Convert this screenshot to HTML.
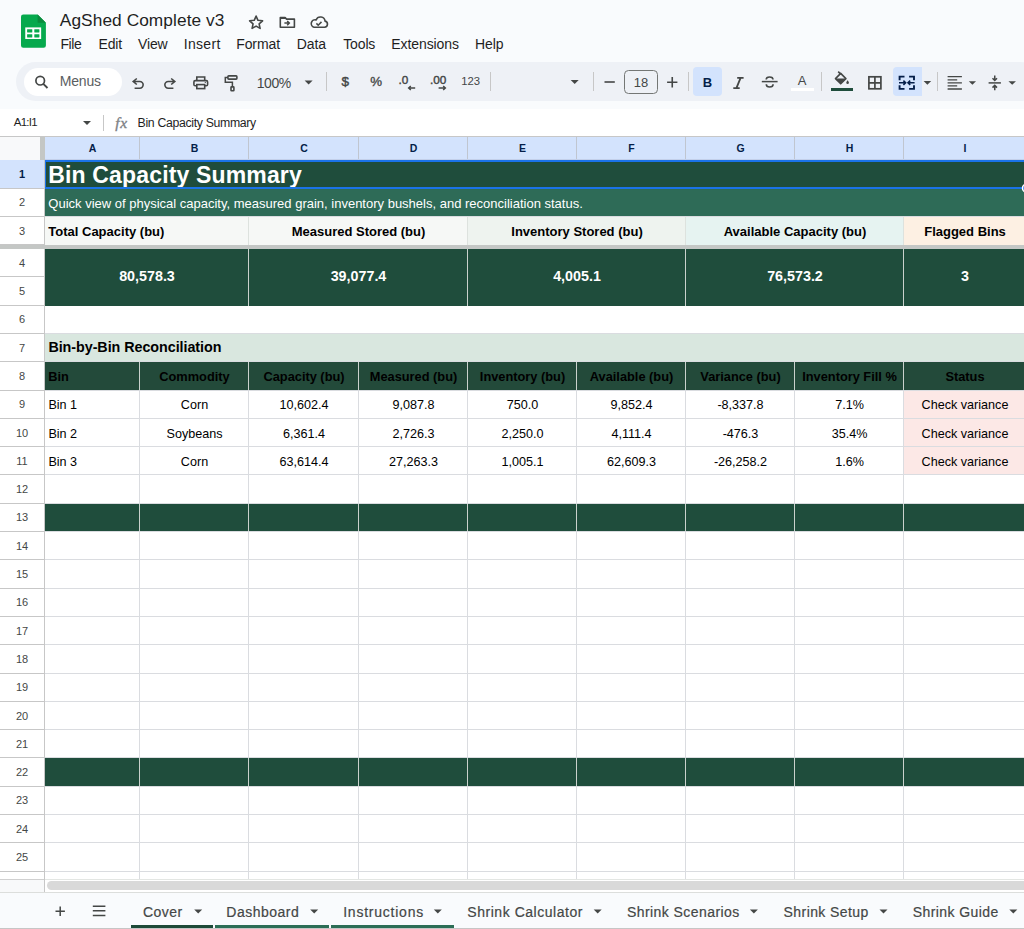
<!DOCTYPE html><html><head><meta charset="utf-8"><style>
*{box-sizing:border-box;margin:0;padding:0}
html,body{width:1024px;height:929px;overflow:hidden;background:#f9fbfd;font-family:'Liberation Sans', sans-serif;position:relative}
.abs{position:absolute}
.t{position:absolute;white-space:nowrap}
svg{position:absolute;overflow:visible}
</style></head><body>

<svg style="left:20.75px;top:14px" width="25" height="34" viewBox="0 0 25 34">
<path d="M2.3 0.5 H16.6 L24.9 8.8 V31.5 A2.3 2.3 0 0 1 22.6 33.8 H2.3 A2.3 2.3 0 0 1 0 31.5 V2.8 A2.3 2.3 0 0 1 2.3 0.5Z" fill="#06a94d"/>
<path d="M16.6 0.5 L24.9 8.8 H16.6Z" fill="#0a8b3d"/>
<rect x="4.25" y="13.4" width="15.9" height="11.6" fill="#fff"/>
<rect x="6.1" y="15.2" width="5.2" height="3.2" rx="0.3" fill="#06a94d"/>
<rect x="13.3" y="15.2" width="5.1" height="3.2" rx="0.3" fill="#06a94d"/>
<rect x="6.1" y="20.2" width="5.2" height="3.2" rx="0.3" fill="#06a94d"/>
<rect x="13.3" y="20.2" width="5.1" height="3.2" rx="0.3" fill="#06a94d"/>
</svg>
<div class="t" style="left:59.80px;top:12.35px;font-size:17.30px;line-height:17.30px;color:#1f1f1f;font-weight:normal;font-family:'Liberation Sans', sans-serif;letter-spacing:0.076px">AgShed Complete v3</div>
<svg style="left:0;top:0" width="1" height="1">
<path d="M256.10 16.10L257.98 20.31L262.57 20.80L259.14 23.89L260.10 28.40L256.10 26.10L252.10 28.40L253.06 23.89L249.63 20.80L254.22 20.31z" fill="none" stroke="#444746" stroke-width="1.6" stroke-linejoin="round"/>
<path d="M280.3 17.6h4.8l1.5 1.5h7.8v8.2H280.3z" fill="none" stroke="#444746" stroke-width="1.6" stroke-linejoin="round"/><path d="M280.3 17.6h4.8l1.5 1.5h-6.3z" fill="#444746"/>
<path d="M284.4 23.1h4.8M287.2 21l2.1 2.1-2.1 2.1" fill="none" stroke="#444746" stroke-width="1.5"/>
<path d="M314 27.2h10.6a3.1 3.1 0 0 0 .5-6.1 4.7 4.7 0 0 0-9-1.2 3.7 3.7 0 0 0-2.1 7.3z" fill="none" stroke="#444746" stroke-width="1.6"/>
<path d="M316.4 23.4l1.8 1.8 3.3-3.3" fill="none" stroke="#444746" stroke-width="1.5"/>
</svg>
<div class="t" style="left:60.40px;top:36.95px;font-size:14.00px;line-height:14.00px;color:#1f1f1f;font-weight:normal;font-family:'Liberation Sans', sans-serif;letter-spacing:-0.367px">File</div>
<div class="t" style="left:98.50px;top:36.95px;font-size:14.00px;line-height:14.00px;color:#1f1f1f;font-weight:normal;font-family:'Liberation Sans', sans-serif;letter-spacing:-0.167px">Edit</div>
<div class="t" style="left:138.00px;top:36.95px;font-size:14.00px;line-height:14.00px;color:#1f1f1f;font-weight:normal;font-family:'Liberation Sans', sans-serif;letter-spacing:-0.133px">View</div>
<div class="t" style="left:183.70px;top:36.95px;font-size:14.00px;line-height:14.00px;color:#1f1f1f;font-weight:normal;font-family:'Liberation Sans', sans-serif;letter-spacing:0.320px">Insert</div>
<div class="t" style="left:236.20px;top:36.95px;font-size:14.00px;line-height:14.00px;color:#1f1f1f;font-weight:normal;font-family:'Liberation Sans', sans-serif;letter-spacing:-0.080px">Format</div>
<div class="t" style="left:296.80px;top:36.95px;font-size:14.00px;line-height:14.00px;color:#1f1f1f;font-weight:normal;font-family:'Liberation Sans', sans-serif;letter-spacing:-0.100px">Data</div>
<div class="t" style="left:343.20px;top:36.95px;font-size:14.00px;line-height:14.00px;color:#1f1f1f;font-weight:normal;font-family:'Liberation Sans', sans-serif;letter-spacing:-0.125px">Tools</div>
<div class="t" style="left:391.30px;top:36.95px;font-size:14.00px;line-height:14.00px;color:#1f1f1f;font-weight:normal;font-family:'Liberation Sans', sans-serif;letter-spacing:-0.089px">Extensions</div>
<div class="t" style="left:475.10px;top:36.95px;font-size:14.00px;line-height:14.00px;color:#1f1f1f;font-weight:normal;font-family:'Liberation Sans', sans-serif;letter-spacing:-0.100px">Help</div>
<div class="abs" style="left:16.00px;top:62.00px;width:1024.00px;height:39.00px;background:#eef1f6;border-radius:19.5px"></div>
<div class="abs" style="left:24.00px;top:68.00px;width:98.00px;height:27.50px;background:#fff;border-radius:14px"></div>
<svg style="left:0;top:0" width="1" height="1"><circle cx="40.2" cy="80.7" r="4.3" fill="none" stroke="#444746" stroke-width="1.7"/><path d="M43.3 83.8l4.2 4.2" stroke="#444746" stroke-width="1.9"/><path d="M136.8 78.5L133.2 81.5l3.6 3M133.6 81.5H139.8A3.35 3.35 0 0 1 139.8 88.2H134.6" fill="none" stroke="#444746" stroke-width="1.6"/><path d="M171.2 78.5L174.8 81.5l-3.6 3M174.4 81.5H168.2A3.35 3.35 0 0 0 168.2 88.2H173.4" fill="none" stroke="#444746" stroke-width="1.6"/><path d="M196.8 80V77h7.9v3" fill="none" stroke="#444746" stroke-width="1.6"/><rect x="193.9" y="80.6" width="13.7" height="5.2" rx="1.3" fill="none" stroke="#444746" stroke-width="1.6"/><rect x="196.8" y="84.6" width="7.9" height="4" fill="#eef1f6" stroke="#444746" stroke-width="1.6"/><circle cx="205.3" cy="82.4" r="0.6" fill="#444746"/><rect x="227.9" y="75.9" width="9" height="3.2" rx="0.8" fill="none" stroke="#444746" stroke-width="1.6"/><path d="M227.9 77.5H225.3V82.2H232.4V86.4" fill="none" stroke="#444746" stroke-width="1.5"/><rect x="231" y="86.9" width="2.9" height="3.9" rx="0.6" fill="none" stroke="#444746" stroke-width="1.6"/></svg>
<div class="t" style="left:59.70px;top:74.45px;font-size:14.00px;line-height:14.00px;color:#5b5e62;font-weight:normal;font-family:'Liberation Sans', sans-serif;letter-spacing:-0.175px">Menus</div>
<div class="t" style="left:256.70px;top:75.95px;font-size:14.00px;line-height:14.00px;color:#444746;font-weight:normal;font-family:'Liberation Sans', sans-serif;letter-spacing:-0.400px">100%</div>
<svg style="left:0;top:0" width="1" height="1"><path d="M304.60 80.60h8.00l-4.00 4.00z" fill="#444746"/></svg>
<div class="abs" style="left:325.50px;top:72.30px;width:1.00px;height:19.10px;background:#c7c7c7;"></div>
<div class="t" style="left:45.20px;width:600px;text-align:center;top:74.57px;font-size:13.50px;line-height:13.50px;color:#444746;font-weight:normal;font-family:'Liberation Sans', sans-serif;-webkit-text-stroke:0.45px #444746">$</div>
<div class="t" style="left:76.10px;width:600px;text-align:center;top:74.84px;font-size:13.30px;line-height:13.30px;color:#444746;font-weight:normal;font-family:'Liberation Sans', sans-serif;-webkit-text-stroke:0.35px #444746">%</div>
<div class="t" style="left:398.60px;top:74.61px;font-size:11.80px;line-height:11.80px;color:#444746;font-weight:normal;font-family:'Liberation Sans', sans-serif;-webkit-text-stroke:0.4px #444746">.0</div>
<div class="t" style="left:429.90px;top:74.61px;font-size:11.80px;line-height:11.80px;color:#444746;font-weight:normal;font-family:'Liberation Sans', sans-serif;-webkit-text-stroke:0.4px #444746">.00</div>
<div class="t" style="left:170.60px;width:600px;text-align:center;top:76.23px;font-size:11.30px;line-height:11.30px;color:#444746;font-weight:normal;font-family:'Liberation Sans', sans-serif">123</div>
<div class="abs" style="left:490.10px;top:72.30px;width:1.00px;height:19.10px;background:#c7c7c7;"></div>
<svg style="left:0;top:0" width="1" height="1"><path d="M570.70 79.90h8.00l-4.00 4.00z" fill="#444746"/></svg>
<div class="abs" style="left:593.20px;top:72.30px;width:1.00px;height:19.10px;background:#c7c7c7;"></div>
<div class="abs" style="left:624.40px;top:70.10px;width:33.20px;height:23.80px;background:transparent;border:1.4px solid #747775;border-radius:4.5px"></div>
<div class="t" style="left:341.00px;width:600px;text-align:center;top:75.89px;font-size:13.00px;line-height:13.00px;color:#444746;font-weight:normal;font-family:'Liberation Sans', sans-serif">18</div>
<div class="abs" style="left:688.20px;top:72.30px;width:1.00px;height:19.10px;background:#c7c7c7;"></div>
<div class="abs" style="left:692.80px;top:67.30px;width:29.10px;height:29.10px;background:#d3e3fd;border-radius:4px"></div>
<div class="t" style="left:407.50px;width:600px;text-align:center;top:75.89px;font-size:13.00px;line-height:13.00px;color:#041e49;font-weight:bold;font-family:'Liberation Sans', sans-serif">B</div>
<div class="t" style="left:502.10px;width:600px;text-align:center;top:73.79px;font-size:13.00px;line-height:13.00px;color:#444746;font-weight:normal;font-family:'Liberation Sans', sans-serif">A</div>
<div class="abs" style="left:790.90px;top:87.70px;width:22.70px;height:3.70px;background:#ffffff;"></div>
<div class="abs" style="left:821.10px;top:72.30px;width:1.00px;height:19.10px;background:#c7c7c7;"></div>
<div class="abs" style="left:830.70px;top:87.70px;width:22.80px;height:3.70px;background:#1f4d3c;"></div>
<div class="abs" style="left:892.50px;top:67.00px;width:29.50px;height:29.40px;background:#d3e3fd;border-radius:4px 0 0 4px"></div>
<svg style="left:0;top:0" width="1" height="1"><path d="M923.60 81.00h7.60l-3.80 3.80z" fill="#444746"/></svg>
<div class="abs" style="left:937.10px;top:72.30px;width:1.00px;height:19.10px;background:#c7c7c7;"></div>
<svg style="left:0;top:0" width="1" height="1"><path d="M968.80 81.15h7.20l-3.60 3.70z" fill="#444746"/></svg>
<svg style="left:0;top:0" width="1" height="1"><path d="M1008.45 81.15h7.50l-3.75 3.70z" fill="#444746"/></svg>
<svg style="left:0;top:0" width="1" height="1"><path d="M415.2 88H408.6M410.8 86l-2.2 2 2.2 2" fill="none" stroke="#444746" stroke-width="1.4"/><path d="M438.6 88H445.4M443.2 86l2.2 2-2.2 2" fill="none" stroke="#444746" stroke-width="1.4"/><path d="M604.5 82h10.3" stroke="#444746" stroke-width="1.6"/><path d="M667.1 82.2h10.3M672.25 77.1v10.3" stroke="#444746" stroke-width="1.6"/><path d="M737.2 77.8h6.4M733.3 88.2h6.4M740.6 77.8l-4.2 10.4" fill="none" stroke="#444746" stroke-width="1.8"/><path d="M761.8 81.6h15.8" stroke="#444746" stroke-width="1.5"/><path d="M773 79.6a3.4 2.6 0 0 0-6.8 0M766.3 84.2a3.4 2.8 0 0 0 6.8 0" fill="none" stroke="#444746" stroke-width="1.6"/><path d="M835.5 78.6l5.2-5.2 5.2 5.2-5.2 5.2z" fill="none" stroke="#444746" stroke-width="1.6" stroke-linejoin="round"/><path d="M835.5 78.6h10.4l-5.2 5.2z" fill="#444746"/><path d="M838.2 71.6l2.5 2.5" stroke="#444746" stroke-width="1.6"/><path d="M847.6 80.2c-.9 1.3-1.3 2-1.3 2.6a1.3 1.3 0 0 0 2.6 0c0-.6-.4-1.3-1.3-2.6z" fill="#444746"/><rect x="868.9" y="76.8" width="12" height="12" fill="none" stroke="#444746" stroke-width="1.7"/><path d="M874.9 76.8v12M868.9 82.8h12" stroke="#444746" stroke-width="1.7"/><path d="M904.5 76.6H899.6V80.2M899.6 85.2V88.9H904.5M909.1 76.6H914V80.2M914 85.2V88.9H909.1" fill="none" stroke="#041e49" stroke-width="1.9"/><path d="M899 82.75h6.2M903.4 80.6l2.2 2.15-2.2 2.15M914.6 82.75h-6.2M910.2 80.6l-2.2 2.15 2.2 2.15" fill="none" stroke="#041e49" stroke-width="1.6"/><path d="M947.6 76.7h14.3M947.6 79.8h9.6M947.6 82.8h14.3M947.6 85.9h9.6M947.6 89h14.3" stroke="#444746" stroke-width="1.3"/><path d="M988.6 82.9h12.3" stroke="#444746" stroke-width="1.5"/><path d="M994.75 75.6v4.4M992.5 78.3l2.25 2.2 2.25-2.2M994.75 90.3v-4.4M992.5 87.6l2.25-2.2 2.25 2.2" fill="none" stroke="#444746" stroke-width="1.5"/></svg>
<div class="abs" style="left:0.00px;top:108.50px;width:1024.00px;height:27.50px;background:#ffffff;"></div>
<div class="t" style="left:13.70px;top:117.36px;font-size:11.50px;line-height:11.50px;color:#1f1f1f;font-weight:normal;font-family:'Liberation Sans', sans-serif;letter-spacing:-0.725px">A1:I1</div>
<svg style="left:0;top:0" width="1" height="1"><path d="M83.00 121.10h8.00l-4.00 4.00z" fill="#444746"/></svg>
<div class="abs" style="left:103.00px;top:115.20px;width:1.00px;height:15.80px;background:#c7c7c7;"></div>
<div class="t" style="left:115.20px;top:115.48px;font-size:15.50px;line-height:15.50px;color:#7d8185;font-weight:normal;font-family:'Liberation Serif', serif;letter-spacing:0.800px;font-style:italic;-webkit-text-stroke:0.35px #7d8185">fx</div>
<div class="t" style="left:137.60px;top:116.89px;font-size:12.30px;line-height:12.30px;color:#1f1f1f;font-weight:normal;font-family:'Liberation Sans', sans-serif;letter-spacing:-0.337px">Bin Capacity Summary</div>
<div class="abs" style="left:0.00px;top:136.00px;width:1024.00px;height:756.00px;background:#ffffff;"></div>
<div class="abs" style="left:0.00px;top:136.00px;width:1024.00px;height:1.00px;background:#c7c7c7;"></div>
<div class="abs" style="left:0.00px;top:137.00px;width:40.30px;height:22.60px;background:#f8f9fa;"></div>
<div class="abs" style="left:0.00px;top:159.60px;width:40.30px;height:1.00px;background:#c7c7c7;"></div>
<div class="abs" style="left:40.30px;top:137.00px;width:4.30px;height:23.20px;background:#c4c7c5;"></div>
<div class="abs" style="left:44.60px;top:137.00px;width:979.40px;height:23.00px;background:#d3e3fd;"></div>
<div class="abs" style="left:139.00px;top:137.00px;width:1.00px;height:23.00px;background:#c0c6d0;"></div>
<div class="abs" style="left:248.00px;top:137.00px;width:1.00px;height:23.00px;background:#c0c6d0;"></div>
<div class="abs" style="left:358.00px;top:137.00px;width:1.00px;height:23.00px;background:#c0c6d0;"></div>
<div class="abs" style="left:467.00px;top:137.00px;width:1.00px;height:23.00px;background:#c0c6d0;"></div>
<div class="abs" style="left:576.00px;top:137.00px;width:1.00px;height:23.00px;background:#c0c6d0;"></div>
<div class="abs" style="left:685.00px;top:137.00px;width:1.00px;height:23.00px;background:#c0c6d0;"></div>
<div class="abs" style="left:794.00px;top:137.00px;width:1.00px;height:23.00px;background:#c0c6d0;"></div>
<div class="abs" style="left:903.00px;top:137.00px;width:1.00px;height:23.00px;background:#c0c6d0;"></div>
<div class="abs" style="left:45.00px;top:159.00px;width:979.00px;height:1.00px;background:#c3d0ea;"></div>
<div class="t" style="left:-207.50px;width:600px;text-align:center;top:143.01px;font-size:10.50px;line-height:10.50px;color:#041e49;font-weight:bold;font-family:'Liberation Sans', sans-serif">A</div>
<div class="t" style="left:-105.50px;width:600px;text-align:center;top:143.01px;font-size:10.50px;line-height:10.50px;color:#041e49;font-weight:bold;font-family:'Liberation Sans', sans-serif">B</div>
<div class="t" style="left:4.00px;width:600px;text-align:center;top:143.01px;font-size:10.50px;line-height:10.50px;color:#041e49;font-weight:bold;font-family:'Liberation Sans', sans-serif">C</div>
<div class="t" style="left:113.50px;width:600px;text-align:center;top:143.01px;font-size:10.50px;line-height:10.50px;color:#041e49;font-weight:bold;font-family:'Liberation Sans', sans-serif">D</div>
<div class="t" style="left:222.50px;width:600px;text-align:center;top:143.01px;font-size:10.50px;line-height:10.50px;color:#041e49;font-weight:bold;font-family:'Liberation Sans', sans-serif">E</div>
<div class="t" style="left:331.50px;width:600px;text-align:center;top:143.01px;font-size:10.50px;line-height:10.50px;color:#041e49;font-weight:bold;font-family:'Liberation Sans', sans-serif">F</div>
<div class="t" style="left:440.50px;width:600px;text-align:center;top:143.01px;font-size:10.50px;line-height:10.50px;color:#041e49;font-weight:bold;font-family:'Liberation Sans', sans-serif">G</div>
<div class="t" style="left:549.50px;width:600px;text-align:center;top:143.01px;font-size:10.50px;line-height:10.50px;color:#041e49;font-weight:bold;font-family:'Liberation Sans', sans-serif">H</div>
<div class="t" style="left:665.00px;width:600px;text-align:center;top:143.01px;font-size:10.50px;line-height:10.50px;color:#041e49;font-weight:bold;font-family:'Liberation Sans', sans-serif">I</div>
<div class="abs" style="left:0.00px;top:160.20px;width:44.60px;height:28.30px;background:#d3e3fd;"></div>
<div class="abs" style="left:0.00px;top:187.50px;width:44.60px;height:1.00px;background:#c7c7c7;"></div>
<div class="abs" style="left:44.60px;top:187.50px;width:979.40px;height:1.00px;background:#dadce0;"></div>
<div class="t" style="left:-278.00px;width:600px;text-align:center;top:168.94px;font-size:11.00px;line-height:11.00px;color:#041e49;font-weight:bold;font-family:'Liberation Sans', sans-serif">1</div>
<div class="abs" style="left:0.00px;top:215.80px;width:44.60px;height:1.00px;background:#c7c7c7;"></div>
<div class="abs" style="left:44.60px;top:215.80px;width:979.40px;height:1.00px;background:#dadce0;"></div>
<div class="t" style="left:-278.00px;width:600px;text-align:center;top:197.24px;font-size:11.00px;line-height:11.00px;color:#444746;font-weight:normal;font-family:'Liberation Sans', sans-serif">2</div>
<div class="abs" style="left:0.00px;top:244.10px;width:44.60px;height:1.00px;background:#c7c7c7;"></div>
<div class="abs" style="left:44.60px;top:244.10px;width:979.40px;height:1.00px;background:#dadce0;"></div>
<div class="t" style="left:-278.00px;width:600px;text-align:center;top:225.54px;font-size:11.00px;line-height:11.00px;color:#444746;font-weight:normal;font-family:'Liberation Sans', sans-serif">3</div>
<div class="abs" style="left:0.00px;top:276.30px;width:44.60px;height:1.00px;background:#c7c7c7;"></div>
<div class="abs" style="left:44.60px;top:276.30px;width:979.40px;height:1.00px;background:#dadce0;"></div>
<div class="t" style="left:-278.00px;width:600px;text-align:center;top:257.74px;font-size:11.00px;line-height:11.00px;color:#444746;font-weight:normal;font-family:'Liberation Sans', sans-serif">4</div>
<div class="abs" style="left:0.00px;top:304.60px;width:44.60px;height:1.00px;background:#c7c7c7;"></div>
<div class="abs" style="left:44.60px;top:304.60px;width:979.40px;height:1.00px;background:#dadce0;"></div>
<div class="t" style="left:-278.00px;width:600px;text-align:center;top:286.04px;font-size:11.00px;line-height:11.00px;color:#444746;font-weight:normal;font-family:'Liberation Sans', sans-serif">5</div>
<div class="abs" style="left:0.00px;top:332.90px;width:44.60px;height:1.00px;background:#c7c7c7;"></div>
<div class="abs" style="left:44.60px;top:332.90px;width:979.40px;height:1.00px;background:#dadce0;"></div>
<div class="t" style="left:-278.00px;width:600px;text-align:center;top:314.34px;font-size:11.00px;line-height:11.00px;color:#444746;font-weight:normal;font-family:'Liberation Sans', sans-serif">6</div>
<div class="abs" style="left:0.00px;top:361.20px;width:44.60px;height:1.00px;background:#c7c7c7;"></div>
<div class="abs" style="left:44.60px;top:361.20px;width:979.40px;height:1.00px;background:#dadce0;"></div>
<div class="t" style="left:-278.00px;width:600px;text-align:center;top:342.64px;font-size:11.00px;line-height:11.00px;color:#444746;font-weight:normal;font-family:'Liberation Sans', sans-serif">7</div>
<div class="abs" style="left:0.00px;top:389.50px;width:44.60px;height:1.00px;background:#c7c7c7;"></div>
<div class="abs" style="left:44.60px;top:389.50px;width:979.40px;height:1.00px;background:#dadce0;"></div>
<div class="t" style="left:-278.00px;width:600px;text-align:center;top:370.94px;font-size:11.00px;line-height:11.00px;color:#444746;font-weight:normal;font-family:'Liberation Sans', sans-serif">8</div>
<div class="abs" style="left:0.00px;top:417.80px;width:44.60px;height:1.00px;background:#c7c7c7;"></div>
<div class="abs" style="left:44.60px;top:417.80px;width:979.40px;height:1.00px;background:#dadce0;"></div>
<div class="t" style="left:-278.00px;width:600px;text-align:center;top:399.24px;font-size:11.00px;line-height:11.00px;color:#444746;font-weight:normal;font-family:'Liberation Sans', sans-serif">9</div>
<div class="abs" style="left:0.00px;top:446.10px;width:44.60px;height:1.00px;background:#c7c7c7;"></div>
<div class="abs" style="left:44.60px;top:446.10px;width:979.40px;height:1.00px;background:#dadce0;"></div>
<div class="t" style="left:-278.00px;width:600px;text-align:center;top:427.54px;font-size:11.00px;line-height:11.00px;color:#444746;font-weight:normal;font-family:'Liberation Sans', sans-serif">10</div>
<div class="abs" style="left:0.00px;top:474.40px;width:44.60px;height:1.00px;background:#c7c7c7;"></div>
<div class="abs" style="left:44.60px;top:474.40px;width:979.40px;height:1.00px;background:#dadce0;"></div>
<div class="t" style="left:-278.00px;width:600px;text-align:center;top:455.84px;font-size:11.00px;line-height:11.00px;color:#444746;font-weight:normal;font-family:'Liberation Sans', sans-serif">11</div>
<div class="abs" style="left:0.00px;top:502.70px;width:44.60px;height:1.00px;background:#c7c7c7;"></div>
<div class="abs" style="left:44.60px;top:502.70px;width:979.40px;height:1.00px;background:#dadce0;"></div>
<div class="t" style="left:-278.00px;width:600px;text-align:center;top:484.14px;font-size:11.00px;line-height:11.00px;color:#444746;font-weight:normal;font-family:'Liberation Sans', sans-serif">12</div>
<div class="abs" style="left:0.00px;top:531.00px;width:44.60px;height:1.00px;background:#c7c7c7;"></div>
<div class="abs" style="left:44.60px;top:531.00px;width:979.40px;height:1.00px;background:#dadce0;"></div>
<div class="t" style="left:-278.00px;width:600px;text-align:center;top:512.44px;font-size:11.00px;line-height:11.00px;color:#444746;font-weight:normal;font-family:'Liberation Sans', sans-serif">13</div>
<div class="abs" style="left:0.00px;top:559.30px;width:44.60px;height:1.00px;background:#c7c7c7;"></div>
<div class="abs" style="left:44.60px;top:559.30px;width:979.40px;height:1.00px;background:#dadce0;"></div>
<div class="t" style="left:-278.00px;width:600px;text-align:center;top:540.74px;font-size:11.00px;line-height:11.00px;color:#444746;font-weight:normal;font-family:'Liberation Sans', sans-serif">14</div>
<div class="abs" style="left:0.00px;top:587.60px;width:44.60px;height:1.00px;background:#c7c7c7;"></div>
<div class="abs" style="left:44.60px;top:587.60px;width:979.40px;height:1.00px;background:#dadce0;"></div>
<div class="t" style="left:-278.00px;width:600px;text-align:center;top:569.04px;font-size:11.00px;line-height:11.00px;color:#444746;font-weight:normal;font-family:'Liberation Sans', sans-serif">15</div>
<div class="abs" style="left:0.00px;top:615.90px;width:44.60px;height:1.00px;background:#c7c7c7;"></div>
<div class="abs" style="left:44.60px;top:615.90px;width:979.40px;height:1.00px;background:#dadce0;"></div>
<div class="t" style="left:-278.00px;width:600px;text-align:center;top:597.34px;font-size:11.00px;line-height:11.00px;color:#444746;font-weight:normal;font-family:'Liberation Sans', sans-serif">16</div>
<div class="abs" style="left:0.00px;top:644.20px;width:44.60px;height:1.00px;background:#c7c7c7;"></div>
<div class="abs" style="left:44.60px;top:644.20px;width:979.40px;height:1.00px;background:#dadce0;"></div>
<div class="t" style="left:-278.00px;width:600px;text-align:center;top:625.64px;font-size:11.00px;line-height:11.00px;color:#444746;font-weight:normal;font-family:'Liberation Sans', sans-serif">17</div>
<div class="abs" style="left:0.00px;top:672.50px;width:44.60px;height:1.00px;background:#c7c7c7;"></div>
<div class="abs" style="left:44.60px;top:672.50px;width:979.40px;height:1.00px;background:#dadce0;"></div>
<div class="t" style="left:-278.00px;width:600px;text-align:center;top:653.94px;font-size:11.00px;line-height:11.00px;color:#444746;font-weight:normal;font-family:'Liberation Sans', sans-serif">18</div>
<div class="abs" style="left:0.00px;top:700.80px;width:44.60px;height:1.00px;background:#c7c7c7;"></div>
<div class="abs" style="left:44.60px;top:700.80px;width:979.40px;height:1.00px;background:#dadce0;"></div>
<div class="t" style="left:-278.00px;width:600px;text-align:center;top:682.24px;font-size:11.00px;line-height:11.00px;color:#444746;font-weight:normal;font-family:'Liberation Sans', sans-serif">19</div>
<div class="abs" style="left:0.00px;top:729.10px;width:44.60px;height:1.00px;background:#c7c7c7;"></div>
<div class="abs" style="left:44.60px;top:729.10px;width:979.40px;height:1.00px;background:#dadce0;"></div>
<div class="t" style="left:-278.00px;width:600px;text-align:center;top:710.54px;font-size:11.00px;line-height:11.00px;color:#444746;font-weight:normal;font-family:'Liberation Sans', sans-serif">20</div>
<div class="abs" style="left:0.00px;top:757.40px;width:44.60px;height:1.00px;background:#c7c7c7;"></div>
<div class="abs" style="left:44.60px;top:757.40px;width:979.40px;height:1.00px;background:#dadce0;"></div>
<div class="t" style="left:-278.00px;width:600px;text-align:center;top:738.84px;font-size:11.00px;line-height:11.00px;color:#444746;font-weight:normal;font-family:'Liberation Sans', sans-serif">21</div>
<div class="abs" style="left:0.00px;top:785.70px;width:44.60px;height:1.00px;background:#c7c7c7;"></div>
<div class="abs" style="left:44.60px;top:785.70px;width:979.40px;height:1.00px;background:#dadce0;"></div>
<div class="t" style="left:-278.00px;width:600px;text-align:center;top:767.14px;font-size:11.00px;line-height:11.00px;color:#444746;font-weight:normal;font-family:'Liberation Sans', sans-serif">22</div>
<div class="abs" style="left:0.00px;top:814.00px;width:44.60px;height:1.00px;background:#c7c7c7;"></div>
<div class="abs" style="left:44.60px;top:814.00px;width:979.40px;height:1.00px;background:#dadce0;"></div>
<div class="t" style="left:-278.00px;width:600px;text-align:center;top:795.44px;font-size:11.00px;line-height:11.00px;color:#444746;font-weight:normal;font-family:'Liberation Sans', sans-serif">23</div>
<div class="abs" style="left:0.00px;top:842.30px;width:44.60px;height:1.00px;background:#c7c7c7;"></div>
<div class="abs" style="left:44.60px;top:842.30px;width:979.40px;height:1.00px;background:#dadce0;"></div>
<div class="t" style="left:-278.00px;width:600px;text-align:center;top:823.74px;font-size:11.00px;line-height:11.00px;color:#444746;font-weight:normal;font-family:'Liberation Sans', sans-serif">24</div>
<div class="abs" style="left:0.00px;top:870.60px;width:44.60px;height:1.00px;background:#c7c7c7;"></div>
<div class="abs" style="left:44.60px;top:870.60px;width:979.40px;height:1.00px;background:#dadce0;"></div>
<div class="t" style="left:-278.00px;width:600px;text-align:center;top:852.04px;font-size:11.00px;line-height:11.00px;color:#444746;font-weight:normal;font-family:'Liberation Sans', sans-serif">25</div>
<div class="abs" style="left:0.00px;top:898.90px;width:44.60px;height:1.00px;background:#c7c7c7;"></div>
<div class="abs" style="left:44.60px;top:898.90px;width:979.40px;height:1.00px;background:#dadce0;"></div>
<div class="abs" style="left:139.00px;top:362.20px;width:1.00px;height:517.80px;background:#dadce0;"></div>
<div class="abs" style="left:248.00px;top:362.20px;width:1.00px;height:517.80px;background:#dadce0;"></div>
<div class="abs" style="left:358.00px;top:362.20px;width:1.00px;height:517.80px;background:#dadce0;"></div>
<div class="abs" style="left:467.00px;top:362.20px;width:1.00px;height:517.80px;background:#dadce0;"></div>
<div class="abs" style="left:576.00px;top:362.20px;width:1.00px;height:517.80px;background:#dadce0;"></div>
<div class="abs" style="left:685.00px;top:362.20px;width:1.00px;height:517.80px;background:#dadce0;"></div>
<div class="abs" style="left:794.00px;top:362.20px;width:1.00px;height:517.80px;background:#dadce0;"></div>
<div class="abs" style="left:903.00px;top:362.20px;width:1.00px;height:517.80px;background:#dadce0;"></div>
<div class="abs" style="left:1026.00px;top:362.20px;width:1.00px;height:517.80px;background:#dadce0;"></div>
<div class="abs" style="left:44.00px;top:160.00px;width:1.00px;height:732.00px;background:#c7c7c7;"></div>
<div class="abs" style="left:45.00px;top:160.20px;width:979.00px;height:28.30px;background:#1f4d3c;"></div>
<div class="t" style="left:48.30px;top:163.73px;font-size:23.00px;line-height:23.00px;color:#ffffff;font-weight:bold;font-family:'Liberation Sans', sans-serif;letter-spacing:0.153px">Bin Capacity Summary</div>
<div class="abs" style="left:45.00px;top:188.30px;width:979.00px;height:28.00px;background:#2e6b57;"></div>
<div class="t" style="left:48.30px;top:196.59px;font-size:13.00px;line-height:13.00px;color:#ffffff;font-weight:normal;font-family:'Liberation Sans', sans-serif">Quick view of physical capacity, measured grain, inventory bushels, and reconciliation status.</div>
<div class="abs" style="left:45.00px;top:160.00px;width:979.00px;height:2.00px;background:#1a73e8;"></div>
<div class="abs" style="left:45.00px;top:187.20px;width:979.00px;height:2.00px;background:#1a73e8;"></div>
<div class="abs" style="left:45.00px;top:160.00px;width:1.40px;height:29.20px;background:#1a73e8;"></div>
<svg style="left:0;top:0" width="1" height="1"><circle cx="1026.5" cy="188.2" r="4" fill="#1a73e8" stroke="#fff" stroke-width="1.5"/></svg>
<div class="abs" style="left:0.00px;top:245.10px;width:1024.00px;height:3.90px;background:#c4c7c5;"></div>
<div class="abs" style="left:45.00px;top:217.00px;width:203.00px;height:28.10px;background:#f6f8f6;"></div>
<div class="t" style="left:48.30px;top:224.69px;font-size:13.00px;line-height:13.00px;color:#000;font-weight:bold;font-family:'Liberation Sans', sans-serif">Total Capacity (bu)</div>
<div class="abs" style="left:248.00px;top:217.00px;width:1.00px;height:28.10px;background:#dde2de;"></div>
<div class="abs" style="left:249.00px;top:217.00px;width:218.00px;height:28.10px;background:#f6f8f6;"></div>
<div class="t" style="left:58.50px;width:600px;text-align:center;top:224.69px;font-size:13.00px;line-height:13.00px;color:#000;font-weight:bold;font-family:'Liberation Sans', sans-serif">Measured Stored (bu)</div>
<div class="abs" style="left:467.00px;top:217.00px;width:1.00px;height:28.10px;background:#dde2de;"></div>
<div class="abs" style="left:468.00px;top:217.00px;width:217.00px;height:28.10px;background:#eef3ef;"></div>
<div class="t" style="left:277.00px;width:600px;text-align:center;top:224.69px;font-size:13.00px;line-height:13.00px;color:#000;font-weight:bold;font-family:'Liberation Sans', sans-serif">Inventory Stored (bu)</div>
<div class="abs" style="left:685.00px;top:217.00px;width:1.00px;height:28.10px;background:#dde2de;"></div>
<div class="abs" style="left:686.00px;top:217.00px;width:217.00px;height:28.10px;background:#e6f3f1;"></div>
<div class="t" style="left:495.00px;width:600px;text-align:center;top:224.69px;font-size:13.00px;line-height:13.00px;color:#000;font-weight:bold;font-family:'Liberation Sans', sans-serif">Available Capacity (bu)</div>
<div class="abs" style="left:903.00px;top:217.00px;width:1.00px;height:28.10px;background:#dde2de;"></div>
<div class="abs" style="left:904.00px;top:217.00px;width:120.00px;height:28.10px;background:#fdf0e3;"></div>
<div class="t" style="left:665.00px;width:600px;text-align:center;top:224.69px;font-size:13.00px;line-height:13.00px;color:#000;font-weight:bold;font-family:'Liberation Sans', sans-serif">Flagged Bins</div>
<div class="abs" style="left:45.00px;top:249.00px;width:979.00px;height:56.60px;background:#1f4d3c;"></div>
<div class="t" style="left:-153.00px;width:600px;text-align:center;top:269.49px;font-size:14.30px;line-height:14.30px;color:#ffffff;font-weight:bold;font-family:'Liberation Sans', sans-serif">80,578.3</div>
<div class="abs" style="left:248.00px;top:249.00px;width:1.00px;height:56.60px;background:#c9d1cc;"></div>
<div class="t" style="left:58.50px;width:600px;text-align:center;top:269.49px;font-size:14.30px;line-height:14.30px;color:#ffffff;font-weight:bold;font-family:'Liberation Sans', sans-serif">39,077.4</div>
<div class="abs" style="left:467.00px;top:249.00px;width:1.00px;height:56.60px;background:#c9d1cc;"></div>
<div class="t" style="left:277.00px;width:600px;text-align:center;top:269.49px;font-size:14.30px;line-height:14.30px;color:#ffffff;font-weight:bold;font-family:'Liberation Sans', sans-serif">4,005.1</div>
<div class="abs" style="left:685.00px;top:249.00px;width:1.00px;height:56.60px;background:#c9d1cc;"></div>
<div class="t" style="left:495.00px;width:600px;text-align:center;top:269.49px;font-size:14.30px;line-height:14.30px;color:#ffffff;font-weight:bold;font-family:'Liberation Sans', sans-serif">76,573.2</div>
<div class="abs" style="left:903.00px;top:249.00px;width:1.00px;height:56.60px;background:#c9d1cc;"></div>
<div class="t" style="left:665.00px;width:600px;text-align:center;top:269.49px;font-size:14.30px;line-height:14.30px;color:#ffffff;font-weight:bold;font-family:'Liberation Sans', sans-serif">3</div>
<div class="abs" style="left:45.00px;top:333.90px;width:979.00px;height:27.30px;background:#d9e7df;"></div>
<div class="t" style="left:48.40px;top:340.49px;font-size:14.30px;line-height:14.30px;color:#000;font-weight:bold;font-family:'Liberation Sans', sans-serif;letter-spacing:-0.038px">Bin-by-Bin Reconciliation</div>
<div class="abs" style="left:45.00px;top:362.20px;width:979.00px;height:28.30px;background:#234a3a;"></div>
<div class="t" style="left:48.30px;top:370.56px;font-size:12.80px;line-height:12.80px;color:#000;font-weight:bold;font-family:'Liberation Sans', sans-serif">Bin</div>
<div class="abs" style="left:139.00px;top:362.20px;width:1.00px;height:28.30px;background:#c9d1cc;"></div>
<div class="t" style="left:-105.50px;width:600px;text-align:center;top:370.56px;font-size:12.80px;line-height:12.80px;color:#000;font-weight:bold;font-family:'Liberation Sans', sans-serif">Commodity</div>
<div class="abs" style="left:248.00px;top:362.20px;width:1.00px;height:28.30px;background:#c9d1cc;"></div>
<div class="t" style="left:4.00px;width:600px;text-align:center;top:370.56px;font-size:12.80px;line-height:12.80px;color:#000;font-weight:bold;font-family:'Liberation Sans', sans-serif">Capacity (bu)</div>
<div class="abs" style="left:358.00px;top:362.20px;width:1.00px;height:28.30px;background:#c9d1cc;"></div>
<div class="t" style="left:113.50px;width:600px;text-align:center;top:370.56px;font-size:12.80px;line-height:12.80px;color:#000;font-weight:bold;font-family:'Liberation Sans', sans-serif">Measured (bu)</div>
<div class="abs" style="left:467.00px;top:362.20px;width:1.00px;height:28.30px;background:#c9d1cc;"></div>
<div class="t" style="left:222.50px;width:600px;text-align:center;top:370.56px;font-size:12.80px;line-height:12.80px;color:#000;font-weight:bold;font-family:'Liberation Sans', sans-serif">Inventory (bu)</div>
<div class="abs" style="left:576.00px;top:362.20px;width:1.00px;height:28.30px;background:#c9d1cc;"></div>
<div class="t" style="left:331.50px;width:600px;text-align:center;top:370.56px;font-size:12.80px;line-height:12.80px;color:#000;font-weight:bold;font-family:'Liberation Sans', sans-serif">Available (bu)</div>
<div class="abs" style="left:685.00px;top:362.20px;width:1.00px;height:28.30px;background:#c9d1cc;"></div>
<div class="t" style="left:440.50px;width:600px;text-align:center;top:370.56px;font-size:12.80px;line-height:12.80px;color:#000;font-weight:bold;font-family:'Liberation Sans', sans-serif">Variance (bu)</div>
<div class="abs" style="left:794.00px;top:362.20px;width:1.00px;height:28.30px;background:#c9d1cc;"></div>
<div class="t" style="left:549.50px;width:600px;text-align:center;top:370.56px;font-size:12.80px;line-height:12.80px;color:#000;font-weight:bold;font-family:'Liberation Sans', sans-serif">Inventory Fill %</div>
<div class="abs" style="left:903.00px;top:362.20px;width:1.00px;height:28.30px;background:#c9d1cc;"></div>
<div class="t" style="left:665.00px;width:600px;text-align:center;top:370.56px;font-size:12.80px;line-height:12.80px;color:#000;font-weight:bold;font-family:'Liberation Sans', sans-serif">Status</div>
<div class="abs" style="left:904.00px;top:390.50px;width:120.00px;height:27.30px;background:#fce8e6;"></div>
<div class="t" style="left:48.40px;top:399.38px;font-size:12.60px;line-height:12.60px;color:#000;font-weight:normal;font-family:'Liberation Sans', sans-serif">Bin 1</div>
<div class="t" style="left:-105.50px;width:600px;text-align:center;top:399.38px;font-size:12.60px;line-height:12.60px;color:#000;font-weight:normal;font-family:'Liberation Sans', sans-serif">Corn</div>
<div class="t" style="left:4.00px;width:600px;text-align:center;top:399.38px;font-size:12.60px;line-height:12.60px;color:#000;font-weight:normal;font-family:'Liberation Sans', sans-serif">10,602.4</div>
<div class="t" style="left:113.50px;width:600px;text-align:center;top:399.38px;font-size:12.60px;line-height:12.60px;color:#000;font-weight:normal;font-family:'Liberation Sans', sans-serif">9,087.8</div>
<div class="t" style="left:222.50px;width:600px;text-align:center;top:399.38px;font-size:12.60px;line-height:12.60px;color:#000;font-weight:normal;font-family:'Liberation Sans', sans-serif">750.0</div>
<div class="t" style="left:331.50px;width:600px;text-align:center;top:399.38px;font-size:12.60px;line-height:12.60px;color:#000;font-weight:normal;font-family:'Liberation Sans', sans-serif">9,852.4</div>
<div class="t" style="left:440.50px;width:600px;text-align:center;top:399.38px;font-size:12.60px;line-height:12.60px;color:#000;font-weight:normal;font-family:'Liberation Sans', sans-serif">-8,337.8</div>
<div class="t" style="left:549.50px;width:600px;text-align:center;top:399.38px;font-size:12.60px;line-height:12.60px;color:#000;font-weight:normal;font-family:'Liberation Sans', sans-serif">7.1%</div>
<div class="t" style="left:665.00px;width:600px;text-align:center;top:399.38px;font-size:12.60px;line-height:12.60px;color:#000;font-weight:normal;font-family:'Liberation Sans', sans-serif">Check variance</div>
<div class="abs" style="left:904.00px;top:418.80px;width:120.00px;height:27.30px;background:#fce8e6;"></div>
<div class="t" style="left:48.40px;top:427.68px;font-size:12.60px;line-height:12.60px;color:#000;font-weight:normal;font-family:'Liberation Sans', sans-serif">Bin 2</div>
<div class="t" style="left:-105.50px;width:600px;text-align:center;top:427.68px;font-size:12.60px;line-height:12.60px;color:#000;font-weight:normal;font-family:'Liberation Sans', sans-serif">Soybeans</div>
<div class="t" style="left:4.00px;width:600px;text-align:center;top:427.68px;font-size:12.60px;line-height:12.60px;color:#000;font-weight:normal;font-family:'Liberation Sans', sans-serif">6,361.4</div>
<div class="t" style="left:113.50px;width:600px;text-align:center;top:427.68px;font-size:12.60px;line-height:12.60px;color:#000;font-weight:normal;font-family:'Liberation Sans', sans-serif">2,726.3</div>
<div class="t" style="left:222.50px;width:600px;text-align:center;top:427.68px;font-size:12.60px;line-height:12.60px;color:#000;font-weight:normal;font-family:'Liberation Sans', sans-serif">2,250.0</div>
<div class="t" style="left:331.50px;width:600px;text-align:center;top:427.68px;font-size:12.60px;line-height:12.60px;color:#000;font-weight:normal;font-family:'Liberation Sans', sans-serif">4,111.4</div>
<div class="t" style="left:440.50px;width:600px;text-align:center;top:427.68px;font-size:12.60px;line-height:12.60px;color:#000;font-weight:normal;font-family:'Liberation Sans', sans-serif">-476.3</div>
<div class="t" style="left:549.50px;width:600px;text-align:center;top:427.68px;font-size:12.60px;line-height:12.60px;color:#000;font-weight:normal;font-family:'Liberation Sans', sans-serif">35.4%</div>
<div class="t" style="left:665.00px;width:600px;text-align:center;top:427.68px;font-size:12.60px;line-height:12.60px;color:#000;font-weight:normal;font-family:'Liberation Sans', sans-serif">Check variance</div>
<div class="abs" style="left:904.00px;top:447.10px;width:120.00px;height:27.30px;background:#fce8e6;"></div>
<div class="t" style="left:48.40px;top:455.98px;font-size:12.60px;line-height:12.60px;color:#000;font-weight:normal;font-family:'Liberation Sans', sans-serif">Bin 3</div>
<div class="t" style="left:-105.50px;width:600px;text-align:center;top:455.98px;font-size:12.60px;line-height:12.60px;color:#000;font-weight:normal;font-family:'Liberation Sans', sans-serif">Corn</div>
<div class="t" style="left:4.00px;width:600px;text-align:center;top:455.98px;font-size:12.60px;line-height:12.60px;color:#000;font-weight:normal;font-family:'Liberation Sans', sans-serif">63,614.4</div>
<div class="t" style="left:113.50px;width:600px;text-align:center;top:455.98px;font-size:12.60px;line-height:12.60px;color:#000;font-weight:normal;font-family:'Liberation Sans', sans-serif">27,263.3</div>
<div class="t" style="left:222.50px;width:600px;text-align:center;top:455.98px;font-size:12.60px;line-height:12.60px;color:#000;font-weight:normal;font-family:'Liberation Sans', sans-serif">1,005.1</div>
<div class="t" style="left:331.50px;width:600px;text-align:center;top:455.98px;font-size:12.60px;line-height:12.60px;color:#000;font-weight:normal;font-family:'Liberation Sans', sans-serif">62,609.3</div>
<div class="t" style="left:440.50px;width:600px;text-align:center;top:455.98px;font-size:12.60px;line-height:12.60px;color:#000;font-weight:normal;font-family:'Liberation Sans', sans-serif">-26,258.2</div>
<div class="t" style="left:549.50px;width:600px;text-align:center;top:455.98px;font-size:12.60px;line-height:12.60px;color:#000;font-weight:normal;font-family:'Liberation Sans', sans-serif">1.6%</div>
<div class="t" style="left:665.00px;width:600px;text-align:center;top:455.98px;font-size:12.60px;line-height:12.60px;color:#000;font-weight:normal;font-family:'Liberation Sans', sans-serif">Check variance</div>
<div class="abs" style="left:45.00px;top:503.70px;width:979.00px;height:27.30px;background:#1f4d3c;"></div>
<div class="abs" style="left:139.00px;top:503.70px;width:1.00px;height:27.30px;background:#c9d1cc;"></div>
<div class="abs" style="left:248.00px;top:503.70px;width:1.00px;height:27.30px;background:#c9d1cc;"></div>
<div class="abs" style="left:358.00px;top:503.70px;width:1.00px;height:27.30px;background:#c9d1cc;"></div>
<div class="abs" style="left:467.00px;top:503.70px;width:1.00px;height:27.30px;background:#c9d1cc;"></div>
<div class="abs" style="left:576.00px;top:503.70px;width:1.00px;height:27.30px;background:#c9d1cc;"></div>
<div class="abs" style="left:685.00px;top:503.70px;width:1.00px;height:27.30px;background:#c9d1cc;"></div>
<div class="abs" style="left:794.00px;top:503.70px;width:1.00px;height:27.30px;background:#c9d1cc;"></div>
<div class="abs" style="left:903.00px;top:503.70px;width:1.00px;height:27.30px;background:#c9d1cc;"></div>
<div class="abs" style="left:45.00px;top:758.40px;width:979.00px;height:27.30px;background:#1f4d3c;"></div>
<div class="abs" style="left:139.00px;top:758.40px;width:1.00px;height:27.30px;background:#c9d1cc;"></div>
<div class="abs" style="left:248.00px;top:758.40px;width:1.00px;height:27.30px;background:#c9d1cc;"></div>
<div class="abs" style="left:358.00px;top:758.40px;width:1.00px;height:27.30px;background:#c9d1cc;"></div>
<div class="abs" style="left:467.00px;top:758.40px;width:1.00px;height:27.30px;background:#c9d1cc;"></div>
<div class="abs" style="left:576.00px;top:758.40px;width:1.00px;height:27.30px;background:#c9d1cc;"></div>
<div class="abs" style="left:685.00px;top:758.40px;width:1.00px;height:27.30px;background:#c9d1cc;"></div>
<div class="abs" style="left:794.00px;top:758.40px;width:1.00px;height:27.30px;background:#c9d1cc;"></div>
<div class="abs" style="left:903.00px;top:758.40px;width:1.00px;height:27.30px;background:#c9d1cc;"></div>
<div class="abs" style="left:0.00px;top:879.50px;width:1024.00px;height:12.50px;background:#ffffff;"></div>
<div class="abs" style="left:45.00px;top:879.00px;width:979.00px;height:1.00px;background:#e3e6e3;"></div>
<div class="abs" style="left:0.00px;top:879.00px;width:44.00px;height:1.00px;background:#d0d0d0;"></div>
<div class="abs" style="left:0.00px;top:880.00px;width:44.00px;height:11.50px;background:#f8f9fa;"></div>
<div class="abs" style="left:44.00px;top:879.00px;width:1.00px;height:13.00px;background:#c7c7c7;"></div>
<div class="abs" style="left:47.00px;top:881.00px;width:993.00px;height:8.80px;background:#d9d9d9;border-radius:4.5px"></div>
<div class="abs" style="left:0.00px;top:891.50px;width:1024.00px;height:1.00px;background:#dcdedc;"></div>
<div class="abs" style="left:0.00px;top:892.60px;width:1024.00px;height:36.40px;background:#f9fbfd;"></div>
<svg style="left:0;top:0" width="1" height="1"><path d="M60.2 906.5v9.4M55.5 911.2h9.4" stroke="#444746" stroke-width="1.5"/><path d="M92.8 906.2h12.6M92.8 910.8h12.6M92.8 915.4h12.6" stroke="#444746" stroke-width="1.5"/></svg>
<div class="t" style="left:143.00px;top:904.55px;font-size:14.00px;line-height:14.00px;color:#444746;font-weight:normal;font-family:'Liberation Sans', sans-serif;letter-spacing:0.425px;-webkit-text-stroke:0.2px #444746">Cover</div>
<svg style="left:0;top:0" width="1" height="1"><path d="M194.20 909.60h8.00l-4.00 4.00z" fill="#444746"/></svg>
<div class="abs" style="left:131.30px;top:925.00px;width:81.70px;height:3.00px;background:#1d4a38;"></div>
<div class="t" style="left:226.30px;top:904.55px;font-size:14.00px;line-height:14.00px;color:#444746;font-weight:normal;font-family:'Liberation Sans', sans-serif;letter-spacing:0.487px;-webkit-text-stroke:0.2px #444746">Dashboard</div>
<svg style="left:0;top:0" width="1" height="1"><path d="M310.20 909.60h8.00l-4.00 4.00z" fill="#444746"/></svg>
<div class="abs" style="left:214.70px;top:925.00px;width:114.80px;height:3.00px;background:#2c6e56;"></div>
<div class="t" style="left:343.20px;top:904.55px;font-size:14.00px;line-height:14.00px;color:#444746;font-weight:normal;font-family:'Liberation Sans', sans-serif;letter-spacing:0.764px;-webkit-text-stroke:0.2px #444746">Instructions</div>
<svg style="left:0;top:0" width="1" height="1"><path d="M433.80 909.60h8.00l-4.00 4.00z" fill="#444746"/></svg>
<div class="abs" style="left:331.20px;top:925.00px;width:122.70px;height:3.00px;background:#2c6e56;"></div>
<div class="t" style="left:467.30px;top:904.55px;font-size:14.00px;line-height:14.00px;color:#444746;font-weight:normal;font-family:'Liberation Sans', sans-serif;letter-spacing:0.537px;-webkit-text-stroke:0.2px #444746">Shrink Calculator</div>
<svg style="left:0;top:0" width="1" height="1"><path d="M593.70 909.60h8.00l-4.00 4.00z" fill="#444746"/></svg>
<div class="t" style="left:627.00px;top:904.55px;font-size:14.00px;line-height:14.00px;color:#444746;font-weight:normal;font-family:'Liberation Sans', sans-serif;letter-spacing:0.427px;-webkit-text-stroke:0.2px #444746">Shrink Scenarios</div>
<svg style="left:0;top:0" width="1" height="1"><path d="M749.90 909.60h8.00l-4.00 4.00z" fill="#444746"/></svg>
<div class="t" style="left:783.60px;top:904.55px;font-size:14.00px;line-height:14.00px;color:#444746;font-weight:normal;font-family:'Liberation Sans', sans-serif;letter-spacing:0.418px;-webkit-text-stroke:0.2px #444746">Shrink Setup</div>
<svg style="left:0;top:0" width="1" height="1"><path d="M879.50 909.60h8.00l-4.00 4.00z" fill="#444746"/></svg>
<div class="t" style="left:912.70px;top:904.55px;font-size:14.00px;line-height:14.00px;color:#444746;font-weight:normal;font-family:'Liberation Sans', sans-serif;letter-spacing:0.427px;-webkit-text-stroke:0.2px #444746">Shrink Guide</div>
<svg style="left:0;top:0" width="1" height="1"><path d="M1009.30 909.60h8.00l-4.00 4.00z" fill="#444746"/></svg>
<div class="abs" style="left:0.00px;top:928.00px;width:1024.00px;height:1.00px;background:#c6c6c6;"></div>
</body></html>
